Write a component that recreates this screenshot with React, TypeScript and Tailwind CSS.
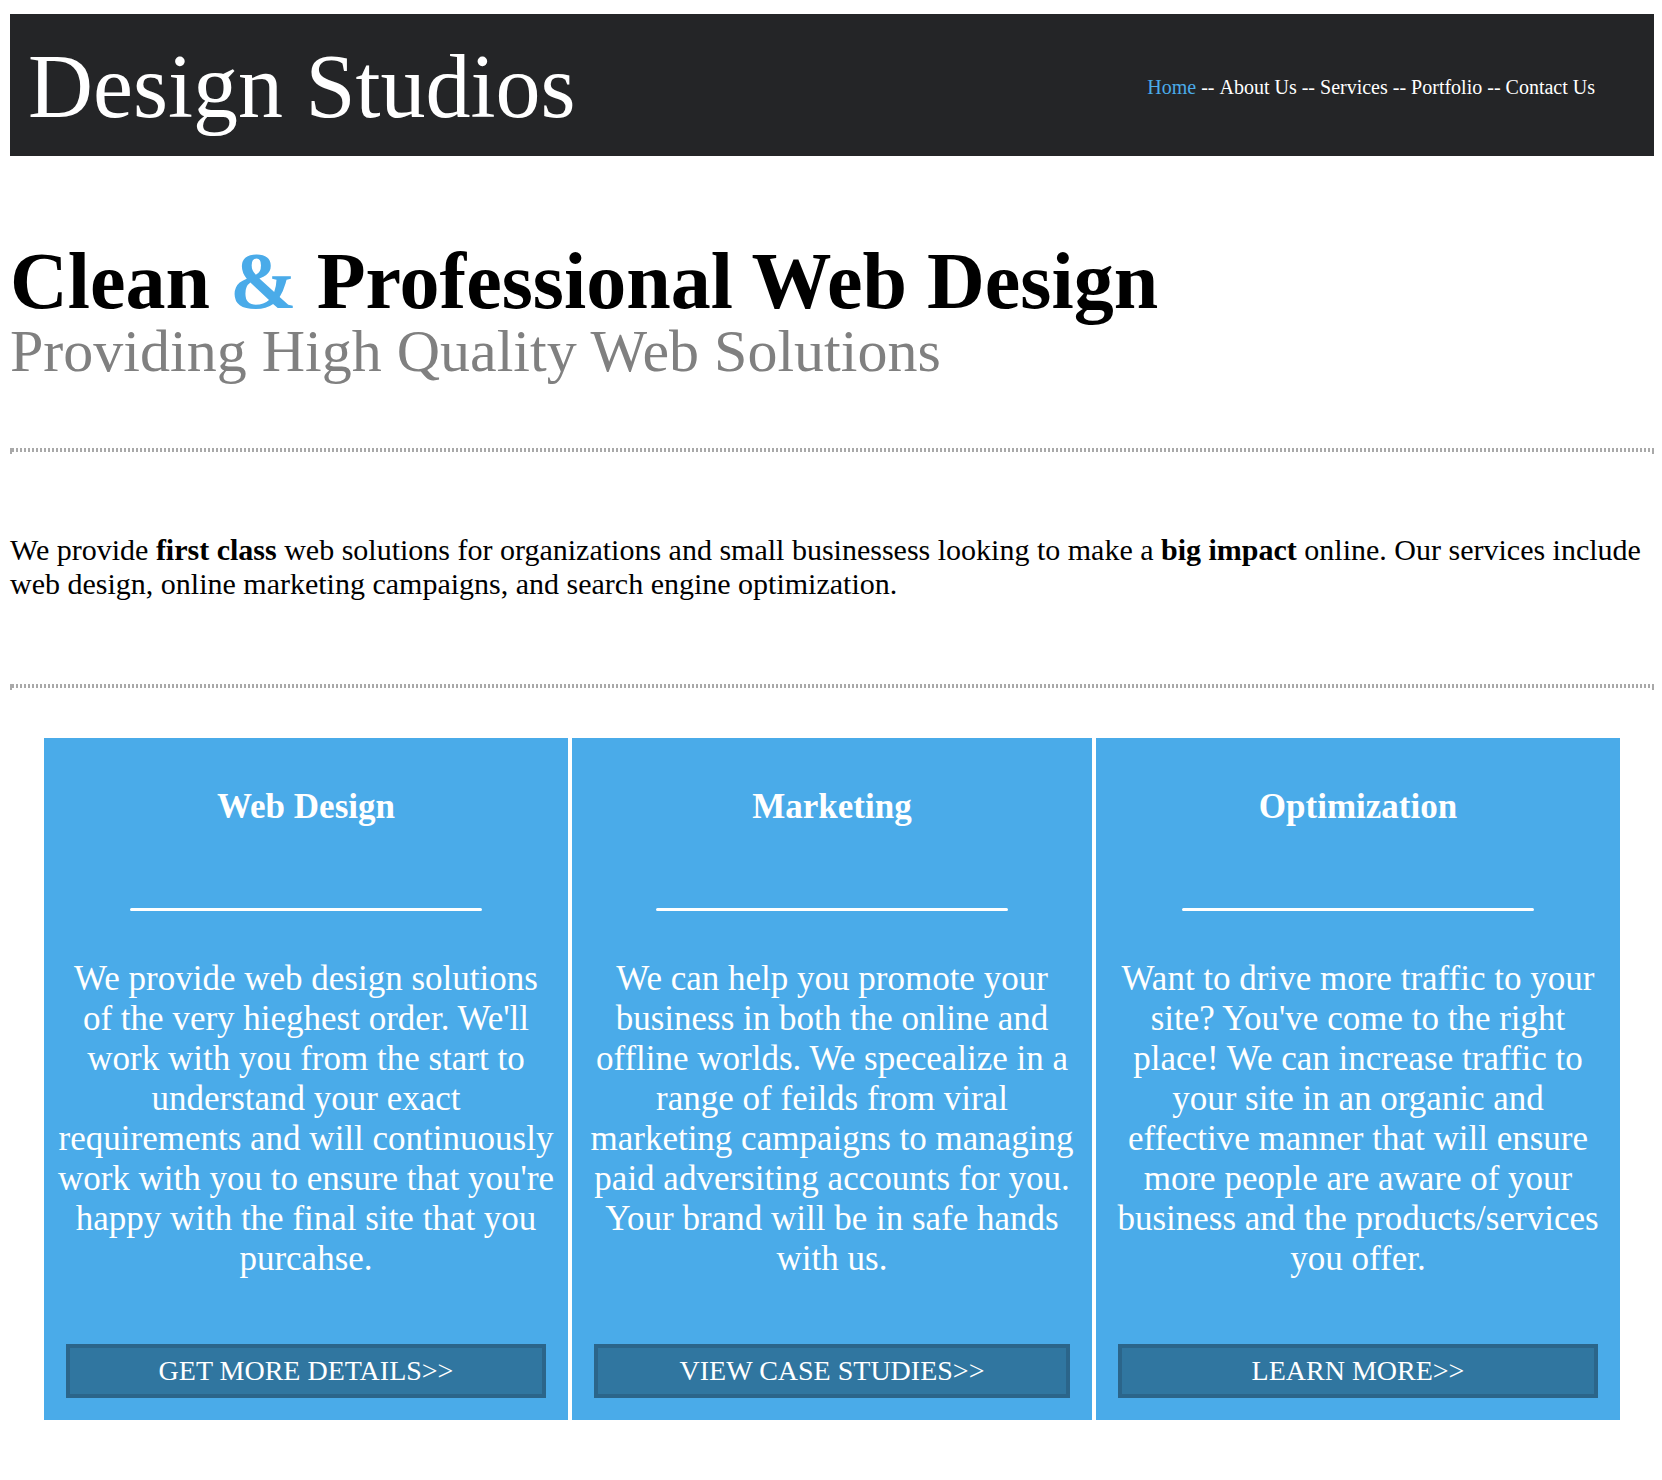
const nav = ["Home", "About Us", "Services", "Portfolio", "Contact Us"];

const cards = [
  {
    title: "Web Design",
    action: "GET MORE DETAILS>>",
    text: "We provide web design solutions of the very hieghest order. We'll work with you from the start to understand your exact requirements and will continuously work with you to ensure that you're happy with the final site that you purcahse.",
  },
  {
    title: "Marketing",
    action: "VIEW CASE STUDIES>>",
    text: "We can help you promote your business in both the online and offline worlds. We specealize in a range of feilds from viral marketing campaigns to managing paid adversiting accounts for you. Your brand will be in safe hands with us.",
  },
  {
    title: "Optimization",
    action: "LEARN MORE>>",
    text: "Want to drive more traffic to your site? You've come to the right place! We can increase traffic to your site in an organic and effective manner that will ensure more people are aware of your business and the products/services you offer.",
  },
];

function DottedRule() {
  return (
    <hr className="h-[6px] border-x-2 border-t-0 border-[#a9a9a9] bg-[repeating-linear-gradient(to_right,#a9a9a9_0px,#a9a9a9_2px,transparent_2px,transparent_4px)] bg-[length:100%_4px] bg-no-repeat" />
  );
}

export default function App() {
  return (
    <div className="pt-[14px] pr-[8px] pb-[60px] pl-[10px] font-['Liberation_Serif',serif] text-black">
      <header className="flex h-[142px] items-center justify-between bg-[#242527] pt-[4px] pr-[59px] pl-[18px] text-white">
        <div className="text-[90px] leading-[100px]">Design Studios</div>
        <nav className="flex gap-[5px] text-[20px] leading-[24px]">
          {nav.map((item, i) => (
            <span key={item} className="flex gap-[5px]">
              {i > 0 && <span>--</span>}
              <a href="#" className={i === 0 ? "text-[#4aabe9]" : ""}>{item}</a>
            </span>
          ))}
        </nav>
      </header>
      <section className="pt-[85px] pb-[67px]">
        <h1 className="text-[80px] leading-[80px] font-bold">
          Clean <span className="text-[#4aabe9]">&amp;</span> Professional Web Design
        </h1>
        <p className="text-[60px] leading-[60px] text-[#808080]">Providing High Quality Web Solutions</p>
      </section>
      <DottedRule />
      <p className="pt-[79px] pb-[83px] text-[30px] leading-[34px]">
        We provide <b>first class</b> web solutions for organizations and small businessess looking to make a <b>big impact</b> online. Our services include web design, online marketing campaigns, and search engine optimization.
      </p>
      <DottedRule />
      <main className="mx-[34px] mt-[48px] grid grid-cols-[524fr_520fr_524fr] gap-[4px] text-center text-white">
        {cards.map((card) => (
          <article key={card.title} className="flex flex-col bg-[#4aabe9] px-[12px] pt-[49px] pb-[22px]">
            <h2 className="text-[35px] leading-[40px] font-bold">{card.title}</h2>
            <hr className="mx-auto mt-[81px] w-[352px] rounded-sm border-t-3 border-white" />
            <p className="mt-[48px] mb-[65px] text-[35px] leading-[40px]">{card.text}</p>
            <button className="mx-[10px] mt-auto h-[54px] border-4 border-[#2b658a] bg-[#3076a0] text-[28px] leading-[32px]">
              {card.action}
            </button>
          </article>
        ))}
      </main>
    </div>
  );
}
